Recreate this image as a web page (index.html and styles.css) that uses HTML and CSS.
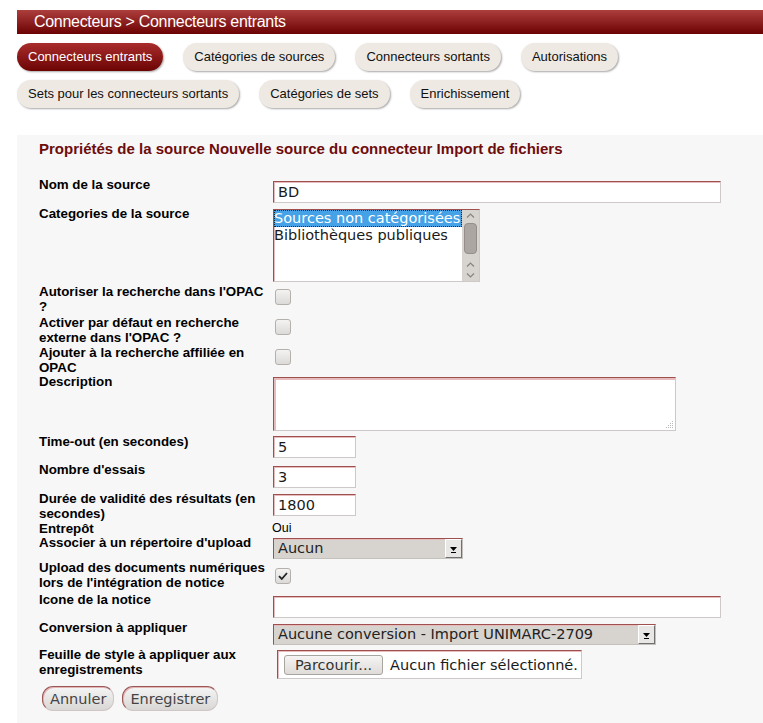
FILE: index.html
```html
<!DOCTYPE html>
<html lang="fr">
<head>
<meta charset="utf-8">
<title>Connecteurs entrants</title>
<link rel="stylesheet" href="styles.css">
</head>
<body>
<div class="page">
  <div class="crumb">Connecteurs &gt; Connecteurs entrants</div>
  <nav class="tabs">
    <div class="tab-row">
      <span class="tab active">Connecteurs entrants</span>
      <span class="tab">Catégories de sources</span>
      <span class="tab">Connecteurs sortants</span>
      <span class="tab">Autorisations</span>
    </div>
    <div class="tab-row">
      <span class="tab">Sets pour les connecteurs sortants</span>
      <span class="tab">Catégories de sets</span>
      <span class="tab">Enrichissement</span>
    </div>
  </nav>

  <section class="panel">
    <h3 class="panel-title">Propriétés de la source Nouvelle source du connecteur Import de fichiers</h3>
    <div class="form">
      <div class="lbl">Nom de la source</div>
      <div class="ctl"><input class="txt long off4" type="text" value="BD"></div>

      <div class="lbl">Categories de la source</div>
      <div class="ctl">
        <div class="listbox off3">
          <div class="lb-opts">
            <div class="opt sel">Sources non catégorisées</div>
            <div class="opt">Bibliothèques publiques</div>
          </div>
          <div class="lb-scroll">
            <svg class="chev" width="17" height="11" viewBox="0 0 17 11"><path d="M5 7.5 L8.5 4 L12 7.5" fill="none" stroke="#8a8480" stroke-width="1.2"/></svg>
            <div class="thumb"></div>
            <svg class="chev" width="17" height="11" viewBox="0 0 17 11"><path d="M5 7.5 L8.5 4 L12 7.5" fill="none" stroke="#8a8480" stroke-width="1.2"/></svg>
            <svg class="chev" width="17" height="11" viewBox="0 0 17 11"><path d="M5 3.5 L8.5 7 L12 3.5" fill="none" stroke="#8a8480" stroke-width="1.2"/></svg>
          </div>
        </div>
      </div>

      <div class="lbl">Autoriser la recherche dans l'OPAC ?</div>
      <div class="ctl"><span class="check off5"></span></div>

      <div class="lbl">Activer par défaut en recherche externe dans l'OPAC ?</div>
      <div class="ctl"><span class="check off4"></span></div>

      <div class="lbl">Ajouter à la recherche affiliée en OPAC</div>
      <div class="ctl"><span class="check off4"></span></div>

      <div class="lbl">Description</div>
      <div class="ctl">
        <div class="area off3">
          <svg class="grip" width="9" height="9" viewBox="0 0 9 9"><g fill="#bbb"><rect x="7" y="1" width="1" height="1"/><rect x="5" y="3" width="1" height="1"/><rect x="7" y="3" width="1" height="1"/><rect x="3" y="5" width="1" height="1"/><rect x="5" y="5" width="1" height="1"/><rect x="7" y="5" width="1" height="1"/><rect x="1" y="7" width="1" height="1"/><rect x="3" y="7" width="1" height="1"/><rect x="5" y="7" width="1" height="1"/><rect x="7" y="7" width="1" height="1"/></g></svg>
        </div>
      </div>

      <div class="lbl">Time-out (en secondes)</div>
      <div class="ctl"><input class="txt short off2" type="text" value="5"></div>

      <div class="lbl">Nombre d'essais</div>
      <div class="ctl"><input class="txt short off4" type="text" value="3"></div>

      <div class="lbl">Durée de validité des résultats (en secondes)</div>
      <div class="ctl"><input class="txt short off3" type="text" value="1800"></div>

      <div class="lbl">Entrepôt</div>
      <div class="ctl"><span class="plain">Oui</span></div>

      <div class="lbl">Associer à un répertoire d'upload</div>
      <div class="ctl">
        <div class="select sel-short off3">
          <span class="sel-val">Aucun</span>
          <span class="sel-btn"><svg width="15" height="17" viewBox="0 0 15 17"><path d="M4 7 H11 L7.5 11 Z" fill="#000"/><rect x="5" y="12" width="5" height="1" fill="#000"/></svg></span>
        </div>
      </div>

      <div class="lbl">Upload des documents numériques lors de l'intégration de notice</div>
      <div class="ctl"><span class="check checked off8"><svg width="14" height="14" viewBox="0 0 14 14"><path d="M3 7.2 L5.8 10 L11 4" fill="none" stroke="#222" stroke-width="1.8"/></svg></span></div>

      <div class="lbl">Icone de la notice</div>
      <div class="ctl"><input class="txt long off4" type="text" value=""></div>

      <div class="lbl">Conversion à appliquer</div>
      <div class="ctl">
        <div class="select sel-long off4">
          <span class="sel-val">Aucune conversion - Import UNIMARC-2709</span>
          <span class="sel-btn"><svg width="15" height="17" viewBox="0 0 15 17"><path d="M4 7 H11 L7.5 11 Z" fill="#000"/><rect x="5" y="12" width="5" height="1" fill="#000"/></svg></span>
        </div>
      </div>

      <div class="lbl">Feuille de style à appliquer aux enregistrements</div>
      <div class="ctl">
        <div class="file off3">
          <span class="file-btn">Parcourir...</span>
          <span class="file-name">Aucun fichier sélectionné.</span>
        </div>
      </div>
    </div>
    <div class="actions">
      <button class="btn" type="button">Annuler</button>
      <button class="btn" type="button">Enregistrer</button>
    </div>
  </section>
</div>
</body>
</html>
```
FILE: styles.css
```css
* { box-sizing: border-box; }
body {
  margin: 0;
  background: #fff;
  font-family: "Liberation Sans", Arial, sans-serif;
  color: #000;
}
.page { padding: 10px 0 0 17px; }

.crumb {
  height: 24px;
  line-height: 24px;
  padding-left: 17px;
  background: linear-gradient(#ad3e3e, #6c0202);
  color: #fff;
  font-size: 16px;
  letter-spacing: -0.3px;
}

.tabs {
  margin-top: 9px;
  display: flex;
  flex-direction: column;
  gap: 9px;
}
.tab-row { display: flex; gap: 20px; }
.tab {
  height: 28px;
  line-height: 28px;
  padding: 0 11px;
  border-radius: 14px;
  background: #efe9e3;
  color: #111;
  font-size: 13px;
  white-space: nowrap;
  box-shadow: 1px 1px 2px rgba(0, 0, 0, 0.35);
}
.tab.active {
  background: linear-gradient(#a92c2c, #6c0404);
  color: #fff;
}

.panel {
  margin-top: 27px;
  background: #f7f7f7;
  padding: 5px 0 30px 22px;
}
.panel-title {
  margin: 0;
  font-size: 15px;
  line-height: 17px;
  font-weight: bold;
  color: #6e0c0c;
}

.form {
  margin-top: 20px;
  display: grid;
  grid-template-columns: 228px 1fr;
  grid-template-rows: 29px 78px 31px 30px 29px 60px 28px 29px 30px 14px 25px 32px 28px 27px 35px;
  column-gap: 6px;
}
.lbl {
  font-size: 13.33px;
  line-height: 15px;
  font-weight: bold;
}
.ctl { min-width: 0; }

.off2 { margin-top: 2px; }
.off3 { margin-top: 3px; }
.off4 { margin-top: 4px; }
.off5 { margin-top: 5px; }
.off8 { margin-top: 8px; }

.txt {
  display: block;
  height: 22px;
  padding: 0 4px;
  margin-bottom: 0;
  border: 1px solid;
  border-color: #a04f4f #cfc8c8 #cfc8c8 #a04f4f;
  box-shadow: inset 1px 1px 0 #e6bcbc;
  background: #fff;
  font-family: "DejaVu Sans", sans-serif;
  font-size: 14.5px;
  color: #1a1a1a;
  outline: none;
}
.txt.long { width: 448px; }
.txt.short { width: 83px; }

.listbox {
  width: 207px;
  height: 73px;
  display: flex;
  border: 1px solid;
  border-color: #a04f4f #cfc8c8 #cfc8c8 #a04f4f;
  box-shadow: inset 1px 1px 0 #e6bcbc;
  background: #fff;
}
.lb-opts {
  flex: 1;
  min-width: 0;
  font-family: "DejaVu Sans", sans-serif;
  font-size: 14.5px;
  color: #1a1a1a;
}
.opt {
  height: 17px;
  line-height: 17px;
  white-space: nowrap;
  overflow: hidden;
}
.opt.sel {
  background: #45a2e6;
  color: #fff;
  outline: 1px dotted #222;
  outline-offset: -1px;
}
.lb-scroll {
  width: 17px;
  background: #d7d3cf;
  display: flex;
  flex-direction: column;
  align-items: center;
}
.chev { display: block; flex: none; }
.thumb {
  width: 13px;
  height: 35px;
  margin: 2px 0 5px;
  border-radius: 4px;
  background: #aca6a2;
  border: 1px solid #948e8a;
}

.check {
  display: block;
  width: 16px;
  height: 16px;
  margin-left: 2px;
  border: 1px solid #b4b0ac;
  border-radius: 3px;
  background: linear-gradient(#f4f3f2, #dcdad8);
}
.check svg { display: block; margin: 0; }

.area {
  position: relative;
  width: 403px;
  height: 54px;
  border: 1px solid;
  border-color: #a04f4f #cfc8c8 #cfc8c8 #a04f4f;
  box-shadow: inset 2px 2px 0 #e6bcbc;
  background: #fff;
}
.grip { position: absolute; right: 1px; bottom: 1px; display: block; }

.plain {
  display: block;
  font-size: 12.5px;
  line-height: 15px;
  margin-left: -1px;
}

.select {
  display: flex;
  height: 21px;
  border: 1px solid;
  border-color: #a04f4f #c4c0bc #c4c0bc #a04f4f;
  box-shadow: inset 0 1px 0 #e6bcbc;
  background: #d7d3cf;
  font-family: "DejaVu Sans", sans-serif;
  font-size: 14.5px;
  color: #222;
}
.sel-short { width: 190px; }
.sel-long { width: 383px; }
.sel-val {
  flex: 1;
  padding-left: 4px;
  line-height: 19px;
  white-space: nowrap;
  overflow: hidden;
}
.sel-btn {
  width: 17px;
  height: 19px;
  background: #e9e7e5;
  border: 1px solid;
  border-color: #fff #707070 #707070 #fff;
}
.sel-btn svg { display: block; }

.file {
  display: flex;
  align-items: center;
  gap: 7px;
  width: 305px;
  height: 29px;
  margin-left: 4px;
  padding-left: 6px;
  border: 1px solid;
  border-color: #a04f4f #cfc8c8 #cfc8c8 #a04f4f;
  box-shadow: inset 1px 1px 0 #e6bcbc;
  background: #fff;
  font-family: "DejaVu Sans", sans-serif;
  font-size: 14.5px;
  color: #1a1a1a;
}
.file-btn {
  height: 20px;
  line-height: 18px;
  padding: 0 10px;
  border: 1px solid #a8a4a0;
  border-radius: 3px;
  background: linear-gradient(#f6f5f4, #dedbd8);
  color: #333;
}

.actions {
  margin-top: 4px;
  margin-left: 3px;
  display: flex;
  gap: 8px;
}
.btn {
  height: 25px;
  padding: 0 7px;
  border: 1px solid;
  border-color: #9a5555 #d0c6c6 #d0c6c6 #9a5555;
  border-radius: 11px;
  background: linear-gradient(#f5f5f5, #d9d7d5);
  box-shadow: inset 1px 1px 0 #e3b5b5;
  font-family: "DejaVu Sans", sans-serif;
  font-size: 14.5px;
  color: #444;
}
```
